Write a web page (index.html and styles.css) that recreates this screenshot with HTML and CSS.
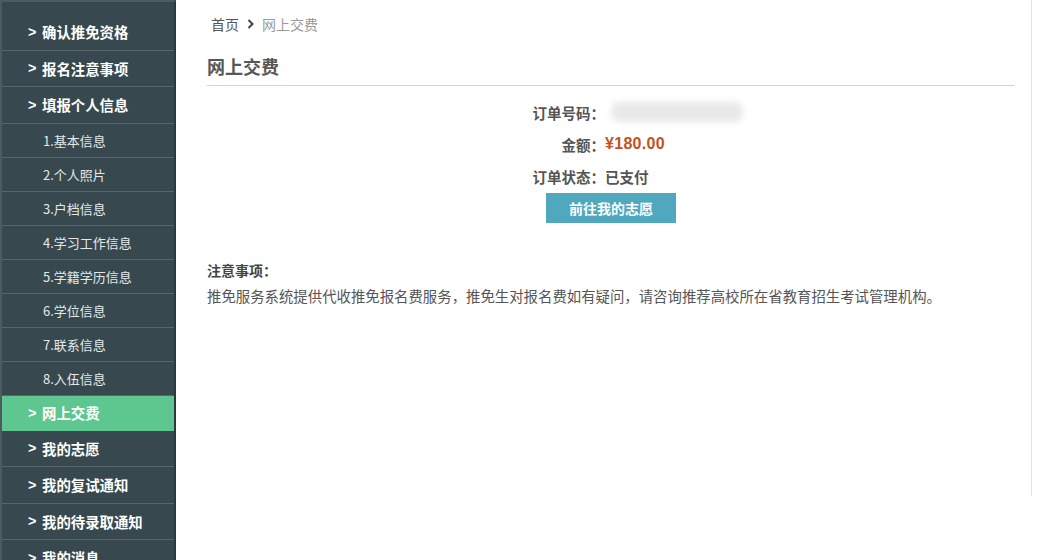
FILE: index.html
```html
<!DOCTYPE html>
<html lang="zh-CN">
<head>
<meta charset="utf-8">
<title>网上交费</title>
<link rel="stylesheet" href="styles.css">
</head>
<body>
<div class="page">
  <nav class="sidebar">
    <ul class="menu">
      <li class="item main"><span class="arrow">&gt;</span>确认推免资格</li>
      <li class="item main"><span class="arrow">&gt;</span>报名注意事项</li>
      <li class="item main"><span class="arrow">&gt;</span>填报个人信息</li>
      <li class="item sub">1.基本信息</li>
      <li class="item sub">2.个人照片</li>
      <li class="item sub">3.户档信息</li>
      <li class="item sub">4.学习工作信息</li>
      <li class="item sub">5.学籍学历信息</li>
      <li class="item sub">6.学位信息</li>
      <li class="item sub">7.联系信息</li>
      <li class="item sub">8.入伍信息</li>
      <li class="item main active"><span class="arrow">&gt;</span>网上交费</li>
      <li class="item main"><span class="arrow">&gt;</span>我的志愿</li>
      <li class="item main"><span class="arrow">&gt;</span>我的复试通知</li>
      <li class="item main"><span class="arrow">&gt;</span>我的待录取通知</li>
      <li class="item main"><span class="arrow">&gt;</span>我的消息</li>
    </ul>
  </nav>
  <main class="content">
    <div class="breadcrumb">
      <span class="crumb-home">首页</span>
      <svg class="crumb-sep" width="7" height="10" viewBox="0 0 7 10"><polyline points="1.5,1 5.5,5 1.5,9" fill="none" stroke="#444" stroke-width="2"/></svg>
      <span class="crumb-current">网上交费</span>
    </div>
    <h1 class="title">网上交费</h1>
    <div class="order">
      <div class="order-row"><span class="label">订单号码：</span><span class="value"><span class="blurred"></span></span></div>
      <div class="order-row"><span class="label">金额：</span><span class="value amount">¥180.00</span></div>
      <div class="order-row"><span class="label">订单状态：</span><span class="value status">已支付</span></div>
      <div class="order-action"><button class="btn">前往我的志愿</button></div>
    </div>
    <div class="notes">
      <div class="notes-title">注意事项：</div>
      <p class="notes-text">推免服务系统提供代收推免报名费服务，推免生对报名费如有疑问，请咨询推荐高校所在省教育招生考试管理机构。</p>
    </div>
  </main>
</div>
</body>
</html>
```

FILE: styles.css
```css
* { box-sizing: border-box; }
html, body {
  margin: 0;
  padding: 0;
  height: 560px;
  overflow: hidden;
  background: #fff;
  font-family: "Noto Sans CJK SC", "Noto Sans", "Liberation Sans", sans-serif;
}
.page {
  display: flex;
  align-items: flex-start;
  height: 560px;
}
.sidebar {
  width: 176px;
  flex: none;
  height: 560px;
  background: #37494f;
  border-left: 2px solid #4b5b60;
  border-top: 2px solid #4b5b60;
  border-right: 2px solid #2b383c;
  padding-top: 12px;
  overflow: hidden;
}
.menu {
  list-style: none;
  margin: 0;
  padding: 0;
}
.item {
  display: flex;
  align-items: center;
  border-bottom: 1px solid #55656a;
  white-space: nowrap;
}
.main {
  height: 36.5px;
  padding-left: 26px;
  color: #fff;
  font-size: 14.4px;
  font-weight: 700;
}
.arrow {
  display: inline-block;
  width: 14px;
  font-family: "Liberation Sans", sans-serif;
  font-weight: 700;
}
.sub {
  height: 34px;
  padding-left: 41px;
  color: #e4e8e9;
  font-size: 13px;
}
.active {
  background: #5dc78f;
  height: 35px;
  border-bottom-color: #5dc78f;
}
.content {
  width: 856px;
  flex: none;
  height: 496px;
  border-right: 1px solid #e4e4e4;
  padding: 14px 16px 0 31px;
  color: #555;
}
.breadcrumb {
  display: flex;
  align-items: center;
  gap: 8px;
  height: 20px;
  padding-left: 4px;
  font-size: 14px;
}
.crumb-home { color: #555; }
.crumb-current { color: #9a9a9a; }
.title {
  margin: 19px 0 0;
  height: 33px;
  line-height: 26px;
  padding-bottom: 6px;
  border-bottom: 1px solid #d4d4d4;
  font-size: 18px;
  font-weight: 700;
  color: #575757;
}
.order {
  margin-top: 10px;
  padding-right: 12px;
}
.order-row {
  display: grid;
  grid-template-columns: 1fr 1fr;
  height: 32px;
  align-items: center;
  font-size: 14.5px;
  font-weight: 700;
  color: #555;
}
.label { text-align: right; }
.value { display: flex; align-items: center; }
.blurred {
  display: block;
  width: 132px;
  height: 20px;
  margin-left: 6px;
  border-radius: 8px;
  background: #e9e9e9;
  filter: blur(3px);
}
.amount {
  color: #c4521d;
  font-size: 16px;
  letter-spacing: 0.3px;
  font-family: "Liberation Sans", "Noto Sans CJK SC", sans-serif;
}
.order-action {
  display: flex;
  justify-content: center;
  padding-left: 12px;
  margin-top: 1px;
}
.btn {
  width: 130px;
  height: 30px;
  border: none;
  background: #50a8bf;
  color: #fff;
  font-family: inherit;
  font-size: 14px;
  font-weight: 700;
  cursor: pointer;
}
.notes {
  margin-top: 37px;
}
.notes-title {
  line-height: 20px;
  font-size: 14px;
  font-weight: 700;
  color: #444;
}
.notes-text {
  margin: 6px 0 0;
  line-height: 20px;
  font-size: 14.4px;
  color: #555;
}
```
